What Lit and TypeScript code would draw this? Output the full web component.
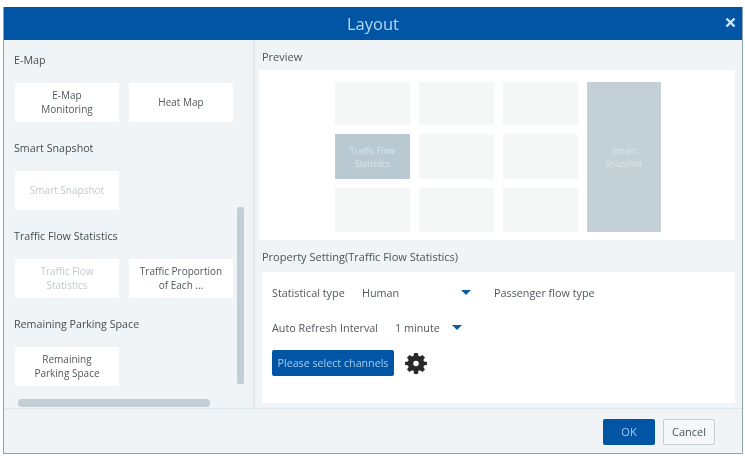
import { LitElement, html, css } from "lit";
import { customElement } from "lit/decorators.js";

@customElement("app-root")
export class AppRoot extends LitElement {
  static styles = css`
    :host { display: block; width: 745px; height: 462px; background: #fff; font-family: "Open Sans", "Noto Sans", sans-serif; color: #3c4448; overflow: hidden; }
    .page { padding: 7px 2px 8px 3px; height: 462px; box-sizing: border-box; filter: blur(0.6px); }
    .dialog { height: 447px; display: flex; flex-direction: column; background: #f1f4f6; border: 1px solid #8fa3ad; border-top: 0; box-sizing: border-box; }
    .title { height: 33px; flex: none; background: #0254a4; color: #b5d9f2; font-size: 16.5px; display: flex; align-items: center; justify-content: center; position: relative; }
    .close { position: absolute; right: 6px; top: 10px; width: 11px; height: 11px; }
    .body { flex: 1; display: flex; min-height: 0; border-bottom: 1px solid #dfe5e8; }
    .left { width: 251px; flex: none; padding: 13px 0 0 11px; box-sizing: border-box; border-right: 2px solid #e3e8eb; position: relative; }
    .sec { font-size: 10.7px; line-height: 14px; color: #454d52; margin-left: -1px; }
    .cards { display: flex; gap: 10px; margin: 16px 0 19px; height: 39px; }
    .card { width: 104px; height: 39px; box-sizing: border-box; padding-bottom: 2px; background: #fff; font-size: 10px; line-height: 14px; text-align: center; display: flex; align-items: center; justify-content: center; color: #50585c; }
    .card.off { color: #c3cacd; }
    .vbar { position: absolute; left: 233px; top: 167px; width: 7px; height: 177px; background: #c3ced4; border-radius: 2px; }
    .hbar { position: absolute; left: 14px; top: 359px; width: 192px; height: 8px; background: #c3ced4; border-radius: 4px; }
    .right { flex: 1; padding: 10px 7px 5px 7px; display: flex; flex-direction: column; min-width: 0; }
    .head { font-size: 11px; line-height: 14px; color: #4a5256; }
    .preview { height: 170px; background: #fff; margin: 6px 0 10px -3px; display: grid; grid-template-columns: repeat(3, 75px) 74px; grid-template-rows: 43px 45px 44px; gap: 9px; padding: 12px 0 0 76px; box-sizing: border-box; justify-content: start; align-content: start; }
    .cell { background: #f5f7f7; }
    .cell.sel { background: #b9c9d1; color: #dfe7ea; font-size: 8.5px; line-height: 13px; text-align: center; display: flex; align-items: center; justify-content: center; }
    .cell.tall { background: #c3d0d6; grid-column: 4; grid-row: 1 / span 3; }
    .props { flex: 1; background: #fff; margin-top: 8px; padding: 10px; display: flex; flex-direction: column; }
    .row { display: flex; align-items: center; font-size: 10.8px; height: 21px; color: #50585c; }
    .row.two { margin-top: 14px; }
    .caret { width: 0; height: 0; border-left: 5px solid transparent; border-right: 5px solid transparent; border-top: 5px solid #0f5c9c; }
    .st { width: 90px; }
    .human { width: 99px; }
    .c1 { margin-right: 23px; }
    .arf { width: 123px; }
    .min { width: 57px; }
    .actions { display: flex; align-items: center; margin-top: 12px; gap: 11px; }
    .btn { background: #0254a4; color: #a5cdea; font-size: 10.7px; height: 26px; width: 122px; border-radius: 2px; display: flex; align-items: center; justify-content: center; }
    .gear { width: 22px; height: 22px; }
    .foot { height: 44px; flex: none; display: flex; align-items: center; justify-content: flex-end; gap: 8px; padding: 1px 27px 0 0; box-sizing: border-box; }
    .ok { width: 52px; height: 26px; background: #0254a4; color: #a5cdea; font-size: 11px; border-radius: 2px; display: flex; align-items: center; justify-content: center; }
    .cancel { width: 52px; height: 26px; box-sizing: border-box; background: #f6f7f8; border: 1px solid #c5ccd0; color: #4a5256; font-size: 11px; border-radius: 2px; display: flex; align-items: center; justify-content: center; }
  `;

  render() {
    return html`<div class="page"><div class="dialog">
      <div class="title">Layout
        <svg class="close" viewBox="0 0 11 11"><path d="M1.500 1.500L9.500 9.500M9.500 1.500L1.500 9.500" stroke="#d5e8f5" stroke-width="2.400" fill="none"/></svg>
      </div>
      <div class="body">
        <div class="left">
          <div class="sec">E-Map</div>
          <div class="cards"><div class="card">E-Map<br>Monitoring</div><div class="card">Heat Map</div></div>
          <div class="sec">Smart Snapshot</div>
          <div class="cards"><div class="card off">Smart Snapshot</div></div>
          <div class="sec">Traffic Flow Statistics</div>
          <div class="cards"><div class="card off">Traffic Flow<br>Statistics</div><div class="card">Traffic Proportion<br>of Each ...</div></div>
          <div class="sec">Remaining Parking Space</div>
          <div class="cards"><div class="card">Remaining<br>Parking Space</div></div>
          <div class="vbar"></div><div class="hbar"></div>
        </div>
        <div class="right">
          <div class="head">Preview</div>
          <div class="preview">
            <div class="cell"></div><div class="cell"></div><div class="cell"></div>
            <div class="cell sel tall">Smart<br>Snapshot</div>
            <div class="cell sel">Traffic Flow<br>Statistics</div><div class="cell"></div><div class="cell"></div>
            <div class="cell"></div><div class="cell"></div><div class="cell"></div>
          </div>
          <div class="head">Property Setting(Traffic Flow Statistics)</div>
          <div class="props">
            <div class="row"><span class="st">Statistical type</span><span class="human">Human</span><span class="caret c1"></span><span>Passenger flow type</span></div>
            <div class="row two"><span class="arf">Auto Refresh Interval</span><span class="min">1 minute</span><span class="caret"></span></div>
            <div class="actions"><div class="btn">Please select channels</div>
              <svg class="gear" viewBox="0 0 24 24"><path fill="#26282a" fill-rule="evenodd" d="M10 1h4l.6 3.200 1.800.8L19 3.200 21.800 6l-1.800 2.600.8 1.800L24 11v3l-3.200.6-.8 1.800 1.800 2.600L19 21.800 16.400 20l-1.800.8L14 24h-4l-.6-3.200-1.800-.8L5 21.800 2.200 19l1.800-2.600-.8-1.800L0 14v-3l3.200-.6.8-1.800L2.200 6 5 3.200 7.600 5l1.800-.8zM12 9.500a3 3 0 1 0 0 6 3 3 0 0 0 0-6z"/></svg>
            </div>
          </div>
        </div>
      </div>
      <div class="foot"><div class="ok">OK</div><div class="cancel">Cancel</div></div>
    </div></div>`;
  }
}
